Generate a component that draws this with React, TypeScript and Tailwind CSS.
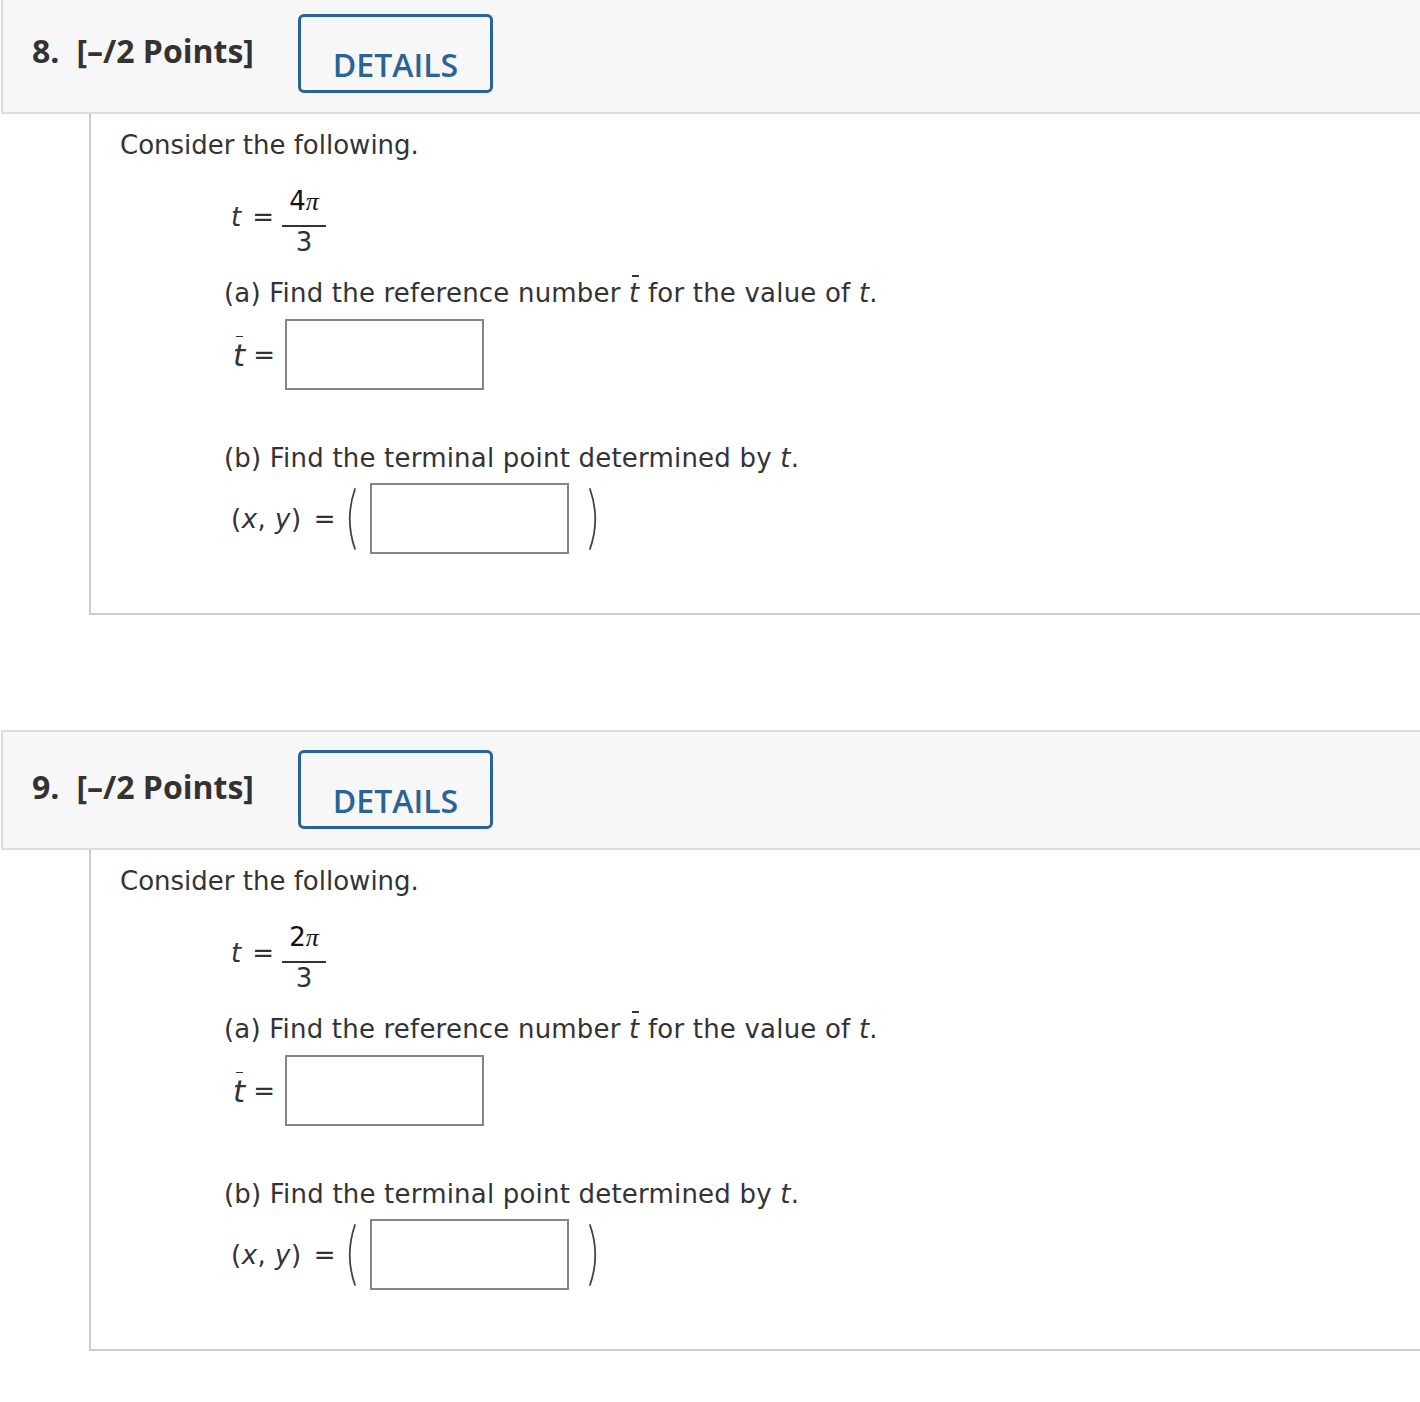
import React from "react";

function TBarInline() {
  return (
    <span className="relative inline-block leading-[26px]">
      <span className="italic">t</span>
      <span className="absolute left-[3px] top-[-5px] h-[1.5px] w-[7px] bg-[#333333]" />
    </span>
  );
}

function Header({ num }: { num: string }) {
  return (
    <div className="ml-[1px] flex h-[120px] border-2 border-r-0 border-[#dddddd] bg-[#f7f7f7] text-[#333333] [font-family:'Open_Sans',sans-serif]">
      <div className="flex w-[295px] shrink-0 items-start pl-[29px] pt-[39px] text-[32px] font-bold leading-[32px]">
        <span>{num}.</span>
        <span className="ml-[17px]">[–/2 Points]</span>
      </div>
      <div className="mt-[18px] flex h-[79px] w-[195px] shrink-0 justify-center rounded-[6px] border-[3px] border-[#27639b] pt-[32px] text-[32px] font-semibold leading-[32px] text-[#2a6497]">
        DETAILS
      </div>
    </div>
  );
}

function Paren({ right }: { right?: boolean }) {
  return (
    <svg width="14" height="62" viewBox="0 0 14 62" className="shrink-0">
      <path
        d={right ? "M3 1 Q13.5 31 3 61" : "M11 1 Q0.5 31 11 61"}
        fill="none"
        stroke="#444444"
        strokeWidth="1.8"
        strokeLinecap="round"
      />
    </svg>
  );
}

function Question({ num, numer }: { num: string; numer: string }) {
  return (
    <div>
      <Header num={num} />
      <div className="ml-[89px] border-b-2 border-l-2 border-[#cccccc] pb-[59px] pl-[29px] pt-[12px] text-[26px] text-[#333333] [font-family:'DejaVu_Sans',Verdana,sans-serif]">
        <p className="leading-[39px]">Consider the following.</p>
        <div className="ml-[111px] mt-[23px] flex items-start">
          <span className="mt-[16px] italic leading-[26px]">t</span>
          <span className="ml-[11px] mt-[16px] leading-[26px]">=</span>
          <div className="ml-[8px] flex w-[44px] flex-col items-center">
            <span className="leading-[26px] text-[#111111]">
              {numer}
              <span className="italic [font-family:'Liberation_Serif',serif]">π</span>
            </span>
            <span className="mt-[10px] h-[2px] w-full bg-[#333333]" />
            <span className="mt-[2px] leading-[26px]">3</span>
          </div>
        </div>
        <p className="ml-[104px] mt-[19px] leading-[39px] tracking-[0.2px]">
          (a) Find the reference number <TBarInline /> for the value of <span className="italic">t</span>.
        </p>
        <div className="ml-[113px] mt-[6px] flex items-center">
          <span className="relative inline-block leading-[32px] text-[31px]">
            <span className="italic">t</span>
            <span className="absolute left-[3px] top-[-3px] h-[1.5px] w-[7px] bg-[#333333]" />
          </span>
          <span className="ml-[8px] leading-[26px]">=</span>
          <div className="ml-[10px] h-[71px] w-[199px] border-2 border-[#858585] bg-white" />
        </div>
        <p className="ml-[104px] mt-[49px] leading-[39px] tracking-[0.2px]">
          (b) Find the terminal point determined by <span className="italic">t</span>.
        </p>
        <div className="ml-[111px] mt-[5px] flex items-center">
          <span className="leading-[26px] tracking-[0.5px]">
            (<span className="italic">x</span>, <span className="italic">y</span>)
          </span>
          <span className="ml-[12px] leading-[26px]">=</span>
          <span className="ml-[9px]">
            <Paren />
          </span>
          <div className="ml-[12px] h-[71px] w-[199px] shrink-0 border-2 border-[#858585] bg-white" />
          <span className="ml-[18px]">
            <Paren right />
          </span>
        </div>
      </div>
    </div>
  );
}

export default function App() {
  return (
    <div className="min-h-[1402px] w-[1420px] overflow-hidden bg-white">
      <div className="-mt-[6px]">
        <Question num="8" numer="4" />
      </div>
      <div className="mt-[115px]">
        <Question num="9" numer="2" />
      </div>
    </div>
  );
}
